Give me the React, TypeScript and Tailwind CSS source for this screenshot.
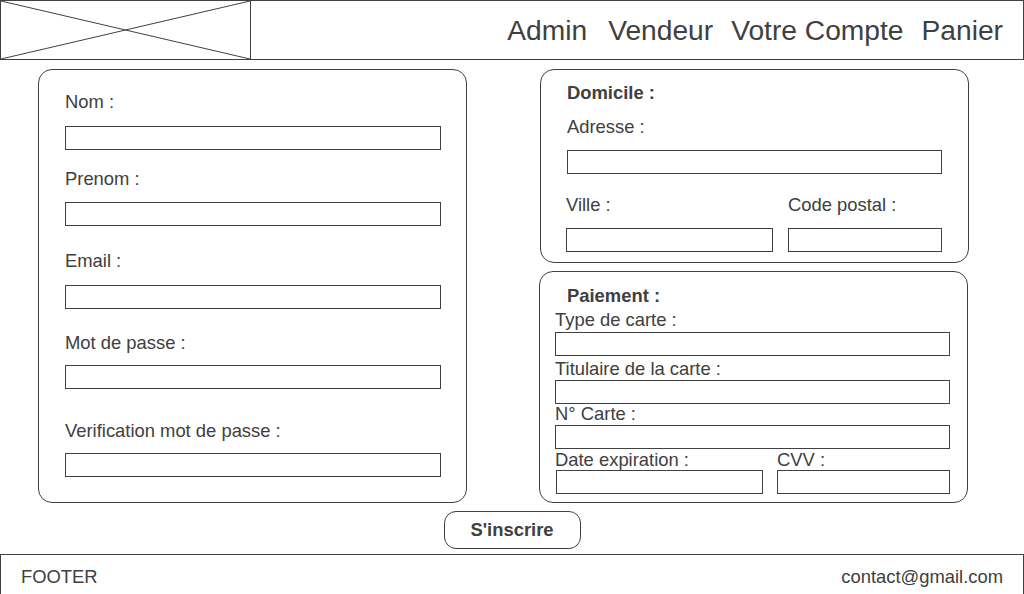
import type { ReactNode } from "react";

const line = "border-[#404040]";

function Label({ children, className = "" }: { children: ReactNode; className?: string }) {
  return <p className={`text-[18.4px] leading-5 whitespace-nowrap ${className}`}>{children}</p>;
}

function Box({ className = "" }: { className?: string }) {
  return <input type="text" className={`block h-6 border ${line} bg-white outline-none ${className}`} />;
}

export default function App() {
  return (
    <div className="flex h-[594px] w-[1024px] flex-col overflow-hidden bg-white font-['Liberation_Sans',Arial,sans-serif] text-[#404040]">
      {/* header */}
      <header className={`flex h-[60px] shrink-0 items-center border ${line}`}>
        <div className={`h-full w-[250px] border-r ${line}`}>
          <svg className="h-full w-full" viewBox="0 0 249 58" preserveAspectRatio="none">
            <line x1="0" y1="0" x2="249" y2="58" stroke="#404040" strokeWidth="1" />
            <line x1="0" y1="58" x2="249" y2="0" stroke="#404040" strokeWidth="1" />
          </svg>
        </div>
        <nav className="ml-auto flex items-center gap-[18px] pr-[20px] text-[28.2px] leading-7">
          <a className="mr-[3px]">Admin</a>
          <a>Vendeur</a>
          <a>Votre Compte</a>
          <a>Panier</a>
        </nav>
      </header>

      {/* main */}
      <main className="flex flex-1 flex-col items-center pt-[9px]">
        <div className="flex w-full pl-[38px]">
          <section className={`flex h-[434px] w-[429px] flex-col rounded-[14px] border ${line} pl-[26px]`}>
            <Label className="mt-[22px]">Nom :</Label>
            <Box className="mt-[14px] w-[376px]" />
            <Label className="mt-[19px]">Prenom :</Label>
            <Box className="mt-[13px] w-[376px]" />
            <Label className="mt-[25px]">Email :</Label>
            <Box className="mt-[14px] w-[376px]" />
            <Label className="mt-[24px]">Mot de passe :</Label>
            <Box className="mt-[12px] w-[376px]" />
            <Label className="mt-[32px]">Verification mot de passe :</Label>
            <Box className="mt-[12px] w-[376px]" />
          </section>

          <div className="ml-[72px] flex flex-col gap-2">
            <section className={`ml-px flex h-[194px] w-[429px] flex-col rounded-[14px] border ${line} pl-[26px]`}>
              <Label className="mt-[13px] font-bold">Domicile :</Label>
              <Label className="mt-[14px]">Adresse :</Label>
              <Box className="mt-[13px] w-[375px]" />
              <div className="-ml-px mt-[21px] flex gap-[15px]">
                <div className="flex w-[207px] flex-col">
                  <Label>Ville :</Label>
                  <Box className="mt-[13px] w-[207px]" />
                </div>
                <div className="flex flex-col">
                  <Label>Code postal :</Label>
                  <Box className="mt-[13px] w-[154px]" />
                </div>
              </div>
            </section>

            <section className={`flex h-[232px] w-[429px] flex-col rounded-[14px] border ${line} pl-[15px]`}>
              <Label className="ml-[12px] mt-[14px] font-bold">Paiement :</Label>
              <Label className="mt-[4px]">Type de carte :</Label>
              <Box className="mt-[2px] w-[395px]" />
              <Label className="mt-[3px]">Titulaire de la carte :</Label>
              <Box className="mt-px w-[395px]" />
              <Label>N° Carte :</Label>
              <Box className="mt-px w-[395px]" />
              <div className="mt-px flex">
                <div className="flex w-[222px] flex-col">
                  <Label>Date expiration :</Label>
                  <Box className="ml-px w-[207px]" />
                </div>
                <div className="flex flex-col">
                  <Label>CVV :</Label>
                  <Box className="w-[173px]" />
                </div>
              </div>
            </section>
          </div>
        </div>

        <button
          type="button"
          className={`mt-2 h-[38px] w-[137px] rounded-[12px] border ${line} text-[18.4px] font-bold leading-5`}
        >
          S'inscrire
        </button>
      </main>

      {/* footer */}
      <footer className={`flex h-[40px] shrink-0 items-start justify-between border border-b-0 ${line} px-[20px] pt-[12px] text-[18.4px] leading-5`}>
        <span>FOOTER</span>
        <span>contact@gmail.com</span>
      </footer>
    </div>
  );
}
